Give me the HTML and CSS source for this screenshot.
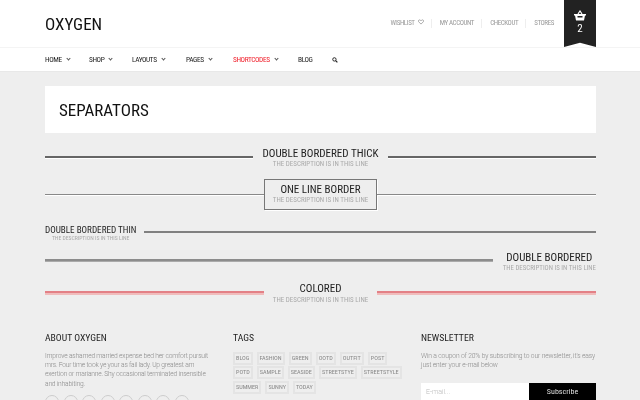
FILE: index.html
```html
<!DOCTYPE html>
<html lang="en">
<head>
<meta charset="utf-8">
<title>Oxygen - Separators</title>
<link rel="stylesheet" href="styles.css">
</head>
<body>
<header class="masthead">
  <div class="wrap top">
    <div class="logo">OXYGEN</div>
    <ul class="toplinks">
      <li>WISHLIST <svg class="heart" viewBox="0 0 10 9"><path d="M5 8 1 4C0 2.500 1 1 2.500 1 3.500 1 4.500 1.500 5 2.500 5.500 1.500 6.500 1 7.500 1 9 1 10 2.500 9 4Z" fill="none" stroke="#777"/></svg></li>
      <li>MY ACCOUNT</li>
      <li>CHECKOUT</li>
      <li>STORES</li>
    </ul>
    <div class="bag">
      <svg class="basket" viewBox="0 0 12 11"><path d="M4 4 6 1 8 4" fill="none" stroke="#fff" stroke-width="1.200"/><path d="M0 4H12V5.500H11L10 10.500H2L1 5.500H0Z" fill="#fff"/><rect x="3.500" y="6" width="5" height="1.500" fill="#222"/></svg>
      <span class="bag-count">2</span>
    </div>
  </div>
  <nav class="mainnav">
    <div class="wrap navrow">
      <a class="navitem nav-home">HOME<i class="chev"></i></a>
      <a class="navitem nav-shop">SHOP<i class="chev"></i></a>
      <a class="navitem nav-layouts">LAYOUTS<i class="chev"></i></a>
      <a class="navitem nav-pages">PAGES<i class="chev"></i></a>
      <a class="navitem nav-short">SHORTCODES<i class="chev"></i></a>
      <a class="navitem nav-blog">BLOG</a>
      <svg class="search" viewBox="0 0 10 10"><circle cx="4" cy="4" r="2.800" fill="none" stroke="#222" stroke-width="1.600"/><path d="M6 6 9 9" stroke="#222" stroke-width="2"/></svg>
    </div>
  </nav>
</header>

<main class="wrap">
  <div class="titlecard"><h1>SEPARATORS</h1></div>

  <section class="sep sep-thick">
    <span class="line"></span>
    <div class="label"><h3>DOUBLE BORDERED THICK</h3><p>THE DESCRIPTION IS IN THIS LINE</p></div>
    <span class="line"></span>
  </section>

  <section class="sep sep-one">
    <span class="line"></span>
    <div class="label boxed"><h3>ONE LINE BORDER</h3><p>THE DESCRIPTION IS IN THIS LINE</p></div>
    <span class="line"></span>
  </section>

  <section class="sep sep-thin">
    <div class="label"><h3 class="small">DOUBLE BORDERED THIN</h3><p>THE DESCRIPTION IS IN THIS LINE</p></div>
    <span class="line"></span>
  </section>

  <section class="sep sep-double">
    <span class="line"></span>
    <div class="label"><h3>DOUBLE BORDERED</h3><p>THE DESCRIPTION IS IN THIS LINE</p></div>
  </section>

  <section class="sep sep-color">
    <span class="line"></span>
    <div class="label"><h3>COLORED</h3><p>THE DESCRIPTION IS IN THIS LINE</p></div>
    <span class="line"></span>
  </section>
</main>

<footer class="wrap footer">
  <div class="col">
    <h4>ABOUT OXYGEN</h4>
    <p class="about">Improve ashamed married expense bed her comfort pursuit mrs. Four time took ye your as fail lady. Up greatest am exertion or marianne. Shy occasional terminated insensible and inhabiting.</p>
    <div class="social">
      <span></span><span></span><span></span><span></span><span></span><span></span><span></span><span></span>
    </div>
  </div>
  <div class="col">
    <h4>TAGS</h4>
    <div class="tags">
      <span>BLOG</span><span>FASHION</span><span>GREEN</span><span>OOTD</span><span>OUTFIT</span><span>POST</span><span>POTD</span><span>SAMPLE</span><span>SEASIDE</span><span>STREETSTYE</span><span>STREETSTYLE</span><span>SUMMER</span><span>SUNNY</span><span>TODAY</span>
    </div>
  </div>
  <div class="col">
    <h4>NEWSLETTER</h4>
    <p class="news">Win a coupon of 20% by subscribing to our newsletter, it's easy just enter your e-mail below</p>
    <div class="form"><span class="email">E-mail...</span><span class="subscribe">Subscribe</span></div>
  </div>
</footer>
</body>
</html>
```
FILE: styles.css
```css
* { box-sizing: border-box; }
html, body { margin: 0; padding: 0; }
body {
  width: 640px;
  height: 400px;
  overflow: hidden;
  background: #eee;
  font-family: Roboto, sans-serif;
  font-stretch: 75%;
  color: #222;
  will-change: transform;
}
h1, h3, h4, p, ul { margin: 0; padding: 0; }
ul { list-style: none; }
.wrap { width: 551px; margin-left: 45px; }

.masthead { background: #fff; height: 72px; border-bottom: 1px solid #e8e8e8; }
.top { height: 47px; display: flex; align-items: flex-start; }
.logo { font-size: 17px; line-height: 48px; color: #111; }
.toplinks { display: flex; font-size: 7px; letter-spacing: -.4px; color: #999; margin: 19px 10px 0 auto; line-height: 9px; }
.toplinks li { padding-right: 7px; margin-right: 8px; border-right: 1px solid #eee; white-space: nowrap; }
.toplinks li:last-child { border: 0; margin: 0; padding: 0; }
.heart { width: 6px; height: 6px; margin-left: 2px; }
.bag {
  width: 32px;
  height: 47px;
  background: #222;
  display: flex;
  flex-direction: column;
  align-items: center;
  clip-path: polygon(0 0, 100% 0, 100% 100%, 50% 91%, 0 100%);
}
.basket { width: 12px; height: 11px; margin-top: 10px; }
.bag-count { color: #fff; font-size: 11px; line-height: 13px; margin-top: 1px; }

.mainnav { height: 24px; border-top: 1px solid #f4f4f4; }
.navrow { display: flex; align-items: center; height: 23px; }
.navitem { font-size: 7.400px; letter-spacing: -.4px; color: #222; white-space: nowrap; display: flex; align-items: center; }
.chev { width: 3px; height: 3px; border: solid #555; border-width: 0 1px 1px 0; transform: rotate(45deg); margin: -2px 0 0 5px; }
.nav-home { width: 44px; }
.nav-shop { width: 43px; }
.nav-layouts { width: 54px; }
.nav-pages { width: 47px; }
.nav-short { width: 65px; color: #f0202c; }
.nav-blog { width: 34px; }
.search { width: 6px; height: 6px; }

.titlecard { background: #fff; height: 47px; margin-top: 14px; padding-left: 14px; display: flex; align-items: center; }
h1 { font-size: 17px; font-weight: 400; color: #111; }

.sep { display: flex; align-items: center; }
.line { flex: 1; display: block; }
.label { text-align: center; white-space: nowrap; }
.label h3 { font-size: 11px; font-weight: 400; line-height: 12px; color: #222; }
.label h3.small { font-size: 9.100px; line-height: 10px; }
.label p { font-size: 7px; line-height: 9px; color: #aaa; }

.sep-thick { margin-top: 15px; }
.sep-thick .label { padding: 0 10px; }
.sep-thick .line { height: 3px; background: #666; border-bottom: 1px solid #fff; margin-top: -2px; }

.sep-one { margin-top: 10px; }
.sep-one .line { height: 2px; background: #888; border-bottom: 1px solid #fff; margin-top: 1px; }
.boxed { width: 113px; height: 31px; padding-top: 4px; border: 1px solid #777; box-shadow: 1px 1px 0 #fff; }

.sep-thin { margin-top: 15px; align-items: flex-start; }
.sep-thin .label { padding-right: 8px; }
.sep-thin .label p { margin-top: -1px; font-size: 5.700px; }
.sep-thin .line { height: 2px; background: #808080; margin-top: 6px; }

.sep-double { margin-top: 9px; }
.sep-double .label { padding-left: 10px; }
.sep-double .label p { font-size: 6.850px; }
.sep-double .line { height: 3px; background: #8c8c8c; border-bottom: 1px solid #aaa; margin-top: -4px; }

.sep-color { margin-top: 10px; }
.sep-color .label { width: 113px; }
.sep-color .label p { margin-top: 1px; }
.sep-color .line { height: 4px; background: #e38086; border-bottom: 2px solid #f0bcbc; margin-top: -2px; }

.footer { display: flex; gap: 13px; margin-top: 27px; }
.col { width: 175px; flex: none; }
.footer h4 { font-size: 9.700px; font-weight: 400; line-height: 12px; color: #222; }
.about, .news { font-weight: 300; font-size: 6.700px; font-stretch: 100%; letter-spacing: -.2px; line-height: 9.200px; color: #888; margin-top: 8px; }
.about { width: 166px; }
.social { display: flex; gap: 4.500px; margin-top: 6px; }
.social span { width: 14px; height: 14px; border: 1px solid #ccc; border-radius: 50%; flex: none; }
.tags { display: flex; flex-wrap: wrap; gap: 1.300px 4px; margin-top: 8px; width: 170px; }
.tags span { font-size: 6.200px; line-height: 9px; height: 13px; padding: 0 1px; border: 2px solid #e4e4e4; color: #888; }
.news { letter-spacing: -.13px; }
.form { display: flex; height: 20px; margin-top: 13px; }
.email { width: 108px; background: #fff; font-weight: 300; font-size: 7px; font-stretch: 100%; color: #bbb; padding: 5px; }
.subscribe { width: 67px; background: #000; color: #ddd; font-size: 8px; text-align: center; padding-top: 4px; }
```
